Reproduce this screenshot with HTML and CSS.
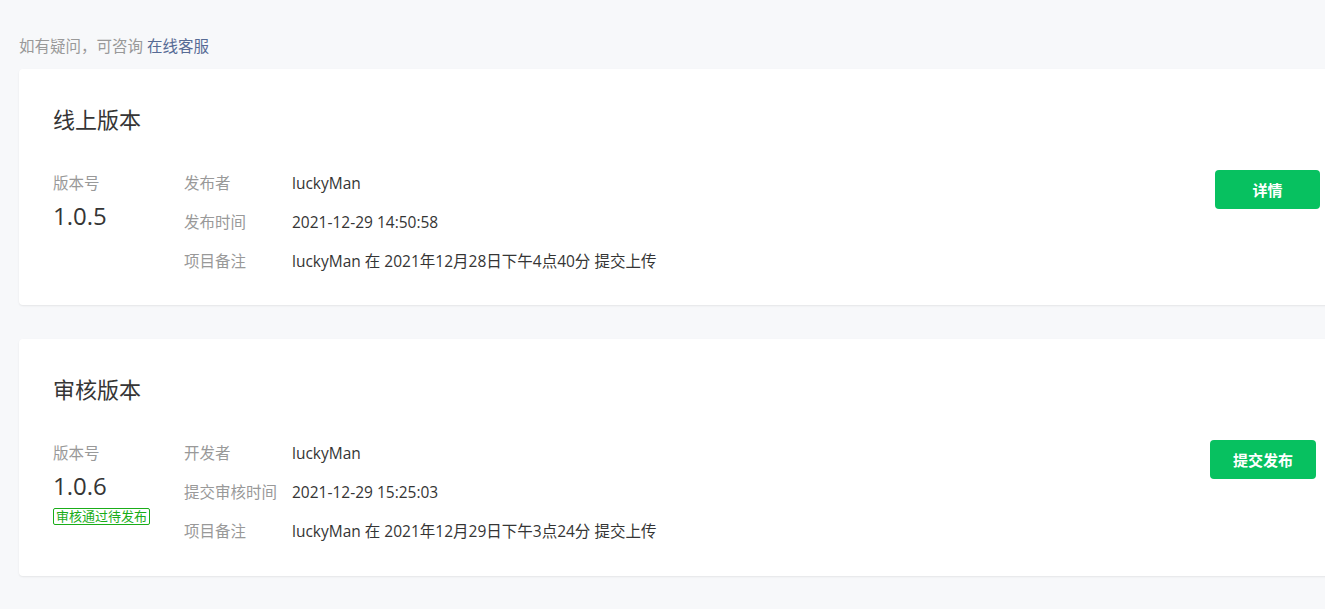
FILE: index.html
```html
<!DOCTYPE html>
<html lang="zh-CN">
<head>
<meta charset="utf-8">
<title>版本管理</title>
<link rel="stylesheet" href="styles.css">
</head>
<body>
<div class="page">
  <p class="help">如有疑问，可咨询 <a class="link" href="#">在线客服</a></p>

  <section class="card">
    <h2 class="card-title">线上版本</h2>
    <div class="card-body">
      <div class="ver">
        <div class="ver-label">版本号</div>
        <div class="ver-num">1.0.5</div>
      </div>
      <dl class="meta">
        <div class="row"><dt>发布者</dt><dd>luckyMan</dd></div>
        <div class="row"><dt>发布时间</dt><dd>2021-12-29 14:50:58</dd></div>
        <div class="row"><dt>项目备注</dt><dd>luckyMan 在 2021年12月28日下午4点40分 提交上传</dd></div>
      </dl>
      <div class="actions">
        <button class="btn">详情</button>
      </div>
    </div>
  </section>

  <section class="card card-tall">
    <h2 class="card-title">审核版本</h2>
    <div class="card-body">
      <div class="ver">
        <div class="ver-label">版本号</div>
        <div class="ver-num">1.0.6</div>
        <span class="tag">审核通过待发布</span>
      </div>
      <dl class="meta">
        <div class="row"><dt>开发者</dt><dd>luckyMan</dd></div>
        <div class="row"><dt>提交审核时间</dt><dd>2021-12-29 15:25:03</dd></div>
        <div class="row"><dt>项目备注</dt><dd>luckyMan 在 2021年12月29日下午3点24分 提交上传</dd></div>
      </dl>
      <div class="actions actions-shift">
        <button class="btn btn-wide">提交发布</button>
      </div>
    </div>
  </section>
</div>
</body>
</html>
```

FILE: styles.css
```css
html, body {
  margin: 0;
  padding: 0;
  overflow: hidden;
  background: #f7f8fa;
}

body {
  font-family: "Open Sans", "Noto Sans CJK SC", sans-serif;
  color: #353535;
}

.page {
  padding: 36px 0 0 19px;
  width: 1340px;
}

.help {
  margin: 0 0 13px;
  font-size: 15.5px;
  line-height: 20px;
  color: #999999;
}

.link {
  color: #576b95;
  text-decoration: none;
}

.card {
  background: #ffffff;
  border-radius: 4px;
  box-shadow: 0 1px 2px rgba(0, 0, 0, 0.08);
  padding: 36px 39px 34px 34px;
  margin-bottom: 34px;
}

.card-tall {
  padding-bottom: 35px;
}

.card-title {
  margin: 0;
  font-size: 22px;
  line-height: 28px;
  font-weight: 400;
  color: #353535;
}

.card-body {
  display: flex;
  align-items: flex-start;
  margin-top: 40px;
}

.ver {
  width: 131px;
  flex: none;
  display: flex;
  flex-direction: column;
  align-items: flex-start;
}

.ver-label {
  font-size: 15.5px;
  line-height: 20px;
  color: #999999;
}

.ver-num {
  margin-top: 7px;
  font-size: 24px;
  line-height: 32px;
  color: #353535;
}

.tag {
  margin-top: 6px;
  border: 1px solid #1aad19;
  border-radius: 2px;
  padding: 0 2px;
  font-size: 13px;
  line-height: 15px;
  color: #1aad19;
}

.meta {
  margin: 0;
  display: flex;
  flex-direction: column;
  gap: 19px;
  flex: 1;
}

.row {
  display: flex;
  font-size: 15.5px;
  line-height: 20px;
}

.row dt {
  width: 108px;
  flex: none;
  color: #999999;
}

.row dd {
  margin: 0;
  color: #353535;
}

.actions {
  margin-top: -3px;
  flex: none;
}

.actions-shift {
  margin-right: 4px;
}

.btn {
  width: 105px;
  height: 39px;
  border: none;
  border-radius: 4px;
  background: #07c160;
  color: #ffffff;
  font-family: "Open Sans", "Noto Sans CJK SC", sans-serif;
  font-size: 15px;
  font-weight: 600;
  cursor: pointer;
}

.btn-wide {
  width: 106px;
}
```
